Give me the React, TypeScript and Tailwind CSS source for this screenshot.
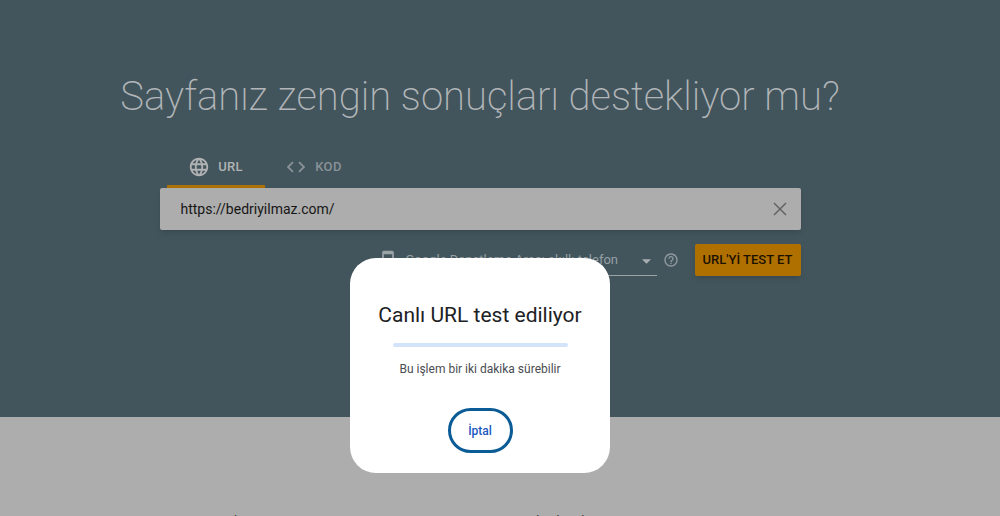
import { useState } from 'react'

const TABS = ['URL', 'KOD'] as const
type Tab = (typeof TABS)[number]

function TabIcon({ tab }: { tab: Tab }) {
  if (tab === 'URL') {
    return (
      <svg viewBox="0 0 24 24" className="size-[22px]" fill="currentColor" aria-hidden="true">
        <path d="M11.99 2C6.47 2 2 6.48 2 12s4.47 10 9.99 10C17.52 22 22 17.52 22 12S17.52 2 11.99 2zm6.93 6h-2.95c-.32-1.25-.78-2.45-1.38-3.56 1.84.63 3.37 1.91 4.33 3.56zM12 4.04c.83 1.2 1.48 2.53 1.91 3.96h-3.82c.43-1.43 1.08-2.76 1.91-3.96zM4.26 14C4.1 13.36 4 12.69 4 12s.1-1.36.26-2h3.38c-.08.66-.14 1.32-.14 2s.06 1.34.14 2H4.26zm.82 2h2.95c.32 1.25.78 2.45 1.38 3.56-1.84-.63-3.37-1.9-4.33-3.56zm2.95-8H5.08c.96-1.66 2.49-2.93 4.33-3.56C8.81 5.55 8.35 6.75 8.03 8zM12 19.96c-.83-1.2-1.48-2.53-1.91-3.96h3.82c-.43 1.43-1.08 2.76-1.91 3.96zM14.34 14H9.66c-.09-.66-.16-1.32-.16-2s.07-1.35.16-2h4.68c.09.65.16 1.32.16 2s-.07 1.34-.16 2zm.25 5.56c.6-1.11 1.06-2.31 1.38-3.56h2.95c-.96 1.65-2.49 2.93-4.33 3.56zM16.36 14c.08-.66.14-1.32.14-2s-.06-1.34-.14-2h3.38c.16.64.26 1.31.26 2s-.1 1.36-.26 2h-3.38z" />
      </svg>
    )
  }
  return (
    <svg viewBox="0 0 24 24" className="size-[22px]" fill="currentColor" aria-hidden="true">
      <path d="M9.4 16.6L4.8 12l4.6-4.6L8 6l-6 6 6 6 1.4-1.4zm5.2 0l4.6-4.6-4.6-4.6L16 6l6 6-6 6-1.4-1.4z" />
    </svg>
  )
}

export default function App() {
  const [tab, setTab] = useState<Tab>('URL')
  const [url, setUrl] = useState('https://bedriyilmaz.com/')
  const [testing, setTesting] = useState(true)

  return (
    <div className="relative h-screen overflow-hidden bg-[#adadad] font-['Roboto',sans-serif]">
      <main className="flex flex-col items-center bg-[#43555c] pt-[73px] pr-10 pb-[141px]">
        <h1 className="text-[40px] leading-[48px] font-extralight whitespace-nowrap text-[#b2b5b9]">
          Sayfanız zengin sonuçları destekliyor mu?
        </h1>

        <form className="mt-[27px] w-full max-w-[641px]" onSubmit={e => { e.preventDefault(); setTesting(true) }}>
          <div role="tablist" className="flex pl-[7px]">
            {TABS.map(t => (
              <button
                key={t}
                type="button"
                role="tab"
                aria-selected={tab === t}
                onClick={() => setTab(t)}
                className={`flex h-10 w-[98px] items-center justify-center gap-2 border-b-[3px] text-[13px] font-medium tracking-wide ${tab === t ? 'border-[#ad7206] text-[#b0b2b4]' : 'border-transparent text-[#899298]'}`}
              >
                <TabIcon tab={t} />
                {t}
              </button>
            ))}
          </div>

          <div className="flex h-[42px] items-center rounded-xs bg-[#adadad] pr-3 pl-[21px] shadow-md">
            <input
              aria-label="URL"
              value={url}
              onChange={e => setUrl(e.target.value)}
              className="min-w-0 flex-1 text-sm text-[#161616] outline-none"
            />
            <button type="button" aria-label="Temizle" onClick={() => setUrl('')} className="text-[#636363]">
              <svg viewBox="0 0 24 24" className="size-[18px]" stroke="currentColor" strokeWidth="2" aria-hidden="true">
                <path d="M4 4l16 16M20 4L4 20" />
              </svg>
            </button>
          </div>

          <div className="mt-3.5 flex items-center justify-end">
            <svg viewBox="0 0 24 24" className="size-5 text-[#9ba3a7]" fill="currentColor" aria-hidden="true">
              <path d="M17 1H7c-1.1 0-2 .9-2 2v18c0 1.1.9 2 2 2h10c1.1 0 2-.9 2-2V3c0-1.1-.9-2-2-2zm0 18H7V5h10v14z" />
            </svg>
            <div className="relative ml-2">
              <select
                aria-label="Kullanıcı aracısı"
                className="h-8 w-[251px] appearance-none border-b border-[#9ba3a7] text-[13px] text-[#969fa4] outline-none"
              >
                <option>Google Denetleme Aracı akıllı telefon</option>
                <option>Google Denetleme Aracı masaüstü</option>
              </select>
              <svg viewBox="0 0 10 5" className="pointer-events-none absolute top-[15px] right-1.5 h-[5px] w-[9px] fill-[#a9aeb1]" aria-hidden="true">
                <path d="M0 0h10L5 5z" />
              </svg>
            </div>
            <button type="button" aria-label="Yardım" className="ml-1.5 text-[#929ca1]">
              <svg viewBox="0 0 24 24" className="size-4" fill="currentColor" aria-hidden="true">
                <path d="M11 18h2v-2h-2v2zm1-16C6.48 2 2 6.48 2 12s4.48 10 10 10 10-4.48 10-10S17.52 2 12 2zm0 18c-4.41 0-8-3.59-8-8s3.59-8 8-8 8 3.59 8 8-3.59 8-8 8zm0-14c-2.21 0-4 1.79-4 4h2c0-1.1.9-2 2-2s2 .9 2 2c0 2-3 1.75-3 5h2c0-2.25 3-2.5 3-5 0-2.21-1.79-4-4-4z" />
              </svg>
            </button>
            <button
              type="submit"
              className="ml-4 h-8 w-[106px] rounded-xs bg-[#b07000] text-[13px] font-medium whitespace-nowrap text-[#1c1200] shadow-md"
            >
              URL'Yİ TEST ET
            </button>
          </div>
        </form>
      </main>

      <footer className="flex justify-center gap-[274px] pt-[92px] pr-[190px] text-[15px] leading-6 text-[#3f3f3f]">
        <p>olan</p>
        <p>ele dergi</p>
      </footer>

      {testing && (
        <div className="absolute inset-0 flex items-start justify-center pt-[258px] pr-10">
          <div
            role="dialog"
            aria-labelledby="dialog-title"
            className="flex w-[260px] flex-col items-center rounded-[26px] bg-white pt-[43px] pb-5"
          >
            <h2 id="dialog-title" className="text-[21px] leading-7 whitespace-nowrap text-[#202124]">
              Canlı URL test ediliyor
            </h2>
            <div role="progressbar" aria-label="Test" className="mt-3.5 h-1 w-[175px] rounded-full bg-[#d3e3fa]" />
            <p className="mt-3 text-xs leading-5 text-[#4a4d51]">Bu işlem bir iki dakika sürebilir</p>
            <button
              type="button"
              onClick={() => setTesting(false)}
              className="mt-[29px] h-[45px] w-[65px] rounded-full border-[3px] border-[#0b5c96] text-xs font-medium text-[#1a57c0]"
            >
              İptal
            </button>
          </div>
        </div>
      )}
    </div>
  )
}
